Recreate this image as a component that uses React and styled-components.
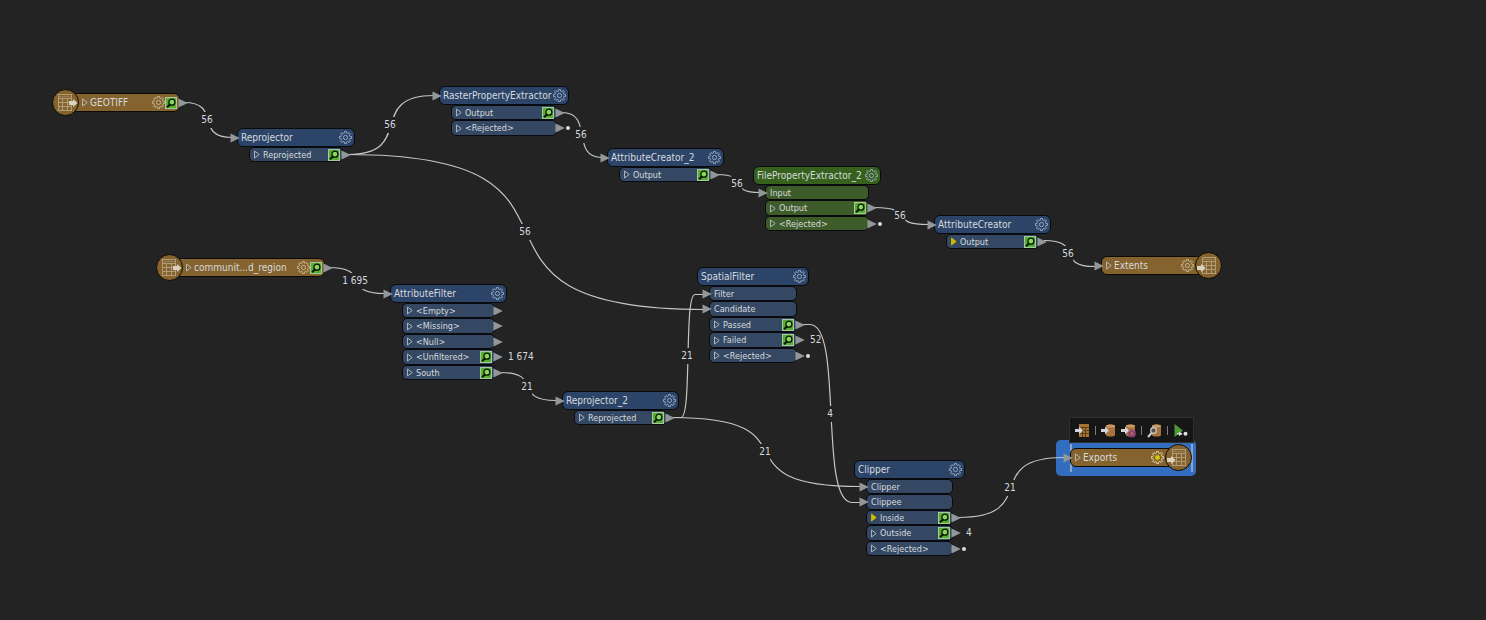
import React from 'react';
import styled, { createGlobalStyle, css } from 'styled-components';

const GlobalStyle = createGlobalStyle`
  *, *::before, *::after { box-sizing: border-box; }
  body {
    margin: 0;
    background: #232323;
    color: #d6dade;
    font-family: "DejaVu Sans Condensed", "DejaVu Sans", sans-serif;
    font-size: 10px;
    line-height: 12px;
  }
`;

const palettes = {
  blue: { head: '#2c4468', port: '#344863' },
  green: { head: '#35611c', port: '#3e5c2a' },
};

const Canvas = styled.main`
  position: relative;
  width: 100%;
  min-height: 100vh;
  overflow: hidden;
`;

const WireLayer = styled.svg`
  position: absolute;
  inset: 0;
  width: 100%;
  height: 100%;
  fill: none;
  stroke: #c6c6c6;
  stroke-width: 1.2;
`;

const WireLabel = styled.span`
  position: absolute;
  left: ${(p) => p.$x}px;
  top: ${(p) => p.$y}px;
  transform: translate(-50%, -50%);
  padding: 2px 0;
  background: #232323;
  white-space: nowrap;
`;

const NodeBox = styled.section`
  position: absolute;
  left: ${(p) => p.$x}px;
  top: ${(p) => p.$y}px;
  width: ${(p) => p.$w}px;
`;

const NodeHeader = styled.header`
  position: relative;
  display: flex;
  align-items: center;
  justify-content: space-between;
  height: 19px;
  padding: 0 2px 0 3px;
  border: 1px solid #080a0d;
  border-radius: 6px;
  background: ${(p) => palettes[p.$tone].head};
`;

const Title = styled.h2`
  margin: 0;
  font: inherit;
  white-space: nowrap;
`;

const PortList = styled.ul`
  display: grid;
  grid-auto-rows: 15px 16px;
  margin: 0 12px;
  padding: 0;
  list-style: none;
`;

const Port = styled.li`
  position: relative;
  display: flex;
  align-items: center;
  gap: 3px;
  padding: 0 2px 0 4px;
  border: 1px solid #080a0d;
  border-radius: 5px;
  background: ${(p) => palettes[p.$tone].port};
  font-size: 9px;
`;

const PortName = styled.span`
  flex: 1;
  white-space: nowrap;
`;

const IconButton = styled.button`
  display: flex;
  flex: none;
  margin: 0;
  padding: 0;
  border: 0;
  background: none;
  color: inherit;
`;

const Arrow = styled.svg`
  position: absolute;
  top: calc(50% - 5px);
  width: 10px;
  height: 10px;
  fill: #92979a;
  ${(p) => (p.$side === 'in' ? css`left: -8px;` : css`right: -9px;`)}
`;

const RejectDot = styled.i`
  position: absolute;
  top: calc(50% - 2px);
  right: -14px;
  width: 4px;
  height: 4px;
  border-radius: 50%;
  background: #dcdcdc;
`;

const PortCount = styled.span`
  position: absolute;
  left: calc(100% + 14px);
  font-size: 10px;
  white-space: nowrap;
`;

const Terminal = styled.section`
  position: absolute;
  left: ${(p) => p.$x}px;
  top: ${(p) => p.$y}px;
  display: flex;
  flex-direction: ${(p) => (p.$writer ? 'row-reverse' : 'row')};
  align-items: center;
  width: ${(p) => p.$w}px;
`;

const Disc = styled.div`
  z-index: 1;
  display: grid;
  flex: none;
  place-items: center;
  width: 27px;
  height: 27px;
  border: 1px solid #0d0a05;
  border-radius: 50%;
  background: #84632e;
`;

const Bar = styled.div`
  position: relative;
  display: flex;
  flex: 1;
  align-items: center;
  gap: 2px;
  height: 19px;
  border: 1px solid #0d0a05;
  background: #84632e;
  ${(p) =>
    p.$writer
      ? css`margin-right: -6px; padding: 0 6px 0 4px; border-radius: 6px 0 0 6px;`
      : css`margin-left: -6px; padding: 0 2px 0 8px; border-radius: 0 6px 6px 0;`}
`;

const BarName = styled(Title)`
  flex: 1;
`;

const Tools = styled.div`
  display: flex;
  align-items: center;
`;

const Selection = styled.div`
  position: absolute;
  left: 1056px;
  top: 440px;
  width: 140px;
  height: 36px;
  padding: 4px 3px 4px 14px;
  border-radius: 5px;
  background: #326dbf;
`;

const SelectionEdges = styled.div`
  height: 100%;
  border: solid #8ba6c8;
  border-width: 0 2px;
`;

const Toolbar = styled.div`
  position: absolute;
  left: 1069px;
  top: 417px;
  display: flex;
  align-items: center;
  gap: 5px;
  height: 26px;
  padding: 0 5px;
  border: 1px solid #2e2e2e;
  background: #161616;
`;

const Divider = styled.i`
  width: 1px;
  height: 9px;
  background: #7c7c7c;
`;

const gearPath = (() => {
  const points = [];
  for (let i = 0; i < 8; i += 1) {
    [[-15, 4.5], [-9, 6.1], [9, 6.1], [15, 4.5]].forEach(([offset, radius]) => {
      const a = ((i * 45 + offset) * Math.PI) / 180;
      points.push(`${(6.5 + radius * Math.cos(a)).toFixed(2)} ${(6.5 + radius * Math.sin(a)).toFixed(2)}`);
    });
  }
  return `M${points.join('L')}Z`;
})();

function Gear({ label, warm, active }) {
  return (
    <IconButton aria-label={`${label} parameters`}>
      <svg width="13" height="13" fill="none" stroke={warm ? '#cbbb9c' : '#9fb0c8'} strokeWidth="0.9">
        <path d={gearPath} strokeLinejoin="round" stroke={active ? '#ead9a8' : undefined} />
        <circle cx="6.5" cy="6.5" r={active ? 2 : 2.1} fill={active ? '#d8c800' : 'none'} stroke={active ? '#d8c800' : undefined} />
      </svg>
    </IconButton>
  );
}

function Expander({ label, filled }) {
  return (
    <IconButton aria-label={`Expand ${label}`}>
      <svg width="6" height="9">
        <path
          d="M.5 1 5.2 4.5.5 8Z"
          fill={filled ? '#cdbb00' : 'none'}
          stroke={filled ? '#cdbb00' : '#b9c0c8'}
          strokeWidth="0.9"
        />
      </svg>
    </IconButton>
  );
}

function Inspect({ label }) {
  return (
    <IconButton aria-label={`Inspect ${label}`}>
      <svg width="12" height="12">
        <rect x=".5" y=".5" width="11" height="11" fill="#55b030" stroke="#a9c7a0" />
        <path d="M2 10.200 4.900 7.600" stroke="#0b1505" strokeWidth="2" />
        <circle cx="6.900" cy="5.200" r="3" fill="#8bd860" stroke="#0b1505" strokeWidth="1.300" />
      </svg>
    </IconButton>
  );
}

function ArrowHead({ side }) {
  return (
    <Arrow $side={side} viewBox="0 0 10 10" aria-hidden="true">
      <path d="M.5.5 9.800 5 .5 9.500Z" />
    </Arrow>
  );
}

function TableGlyph({ writer }) {
  const x = writer ? 6 : 5;
  return (
    <svg width="25" height="25" aria-hidden="true">
      <g fill="none" stroke="#b09c78" strokeWidth="1">
        <rect x={x + 0.5} y="4.5" width="13" height="16" />
        <path d={`M${x} 8.5h14M${x} 12.5h14M${x} 16.5h14M${x + 4.5} 8v13M${x + 9.5} 8v13`} />
        <path d={`M${x + 1} 6.5h12`} strokeOpacity=".5" />
      </g>
      <path
        transform={writer ? 'translate(1 15)' : 'translate(16 13)'}
        d="M0-2H4V-4L8.5 0 4 4V2H0Z"
        fill="#dcd2c0"
      />
    </svg>
  );
}

const whiteArrow = 'M0 6h4V3.5L8 7.5 4 11.5V9H0Z';
const drum = 'M5 3c0-1 2-1.500 4.500-1.500S14 2 14 3v9c0 1-2 1.500-4.500 1.500S5 13 5 12Z';

function ToolGlyph({ kind }) {
  return (
    <svg width="15" height="15" aria-hidden="true">
      {kind === 'table' && (
        <>
          <rect x="4" y="1" width="10" height="13" fill="#a87434" />
          <path d="M4 4.500h10M4 7.500h10M4 10.500h10M7.500 4v10M10.500 4v10" stroke="#4f3413" strokeWidth="0.8" />
        </>
      )}
      {kind !== 'table' && kind !== 'run' && (
        <>
          <path d={drum} fill="#a8733c" />
          <ellipse cx="9.500" cy="3" rx="4.500" ry="1.500" fill="#c79b66" />
        </>
      )}
      {kind === 'options' && (
        <>
          <circle cx="11" cy="10.500" r="3" fill="none" stroke="#8f3d88" strokeWidth="2.200" strokeDasharray="1.500 .8" />
          <circle cx="11" cy="10.500" r="2" fill="none" stroke="#8f3d88" strokeWidth="1.200" />
        </>
      )}
      {(kind === 'table' || kind === 'drum' || kind === 'options') && <path d={whiteArrow} fill="#d4d4d4" />}
      {kind === 'inspect' && (
        <g stroke="#cdd1d4" fill="#5c5346">
          <path d="M1 14 4.500 10" strokeWidth="2" />
          <circle cx="6.500" cy="7.500" r="2.800" strokeWidth="1.200" />
        </g>
      )}
      {kind === 'run' && (
        <>
          <path d="M1.500 1 10 7.500 1.500 14Z" fill="#4c9a35" />
          <path d="M4 10.800h5" stroke="#e0e0e0" strokeWidth="1.200" />
          <path d="M6 8.500 9.500 10.800 6 13Z" fill="#e0e0e0" />
          <circle cx="12.500" cy="10.800" r="2" fill="#e0e0e0" />
        </>
      )}
    </svg>
  );
}

const nodes = [
  { name: 'Reprojector', x: 237, y: 128, w: 118, input: true, ports: [{ name: 'Reprojected', inspect: true }] },
  {
    name: 'RasterPropertyExtractor', x: 439, y: 86, w: 130, input: true,
    ports: [{ name: 'Output', inspect: true }, { name: '<Rejected>', dot: true }],
  },
  { name: 'AttributeCreator_2', x: 607, y: 148, w: 117, input: true, ports: [{ name: 'Output', inspect: true }] },
  {
    name: 'FilePropertyExtractor_2', x: 753, y: 166, w: 128, tone: 'green',
    ports: [{ name: 'Input', input: true }, { name: 'Output', inspect: true }, { name: '<Rejected>', dot: true }],
  },
  { name: 'AttributeCreator', x: 934, y: 215, w: 117, input: true, ports: [{ name: 'Output', inspect: true, filled: true }] },
  {
    name: 'AttributeFilter', x: 390, y: 284, w: 117, input: true,
    ports: [
      { name: '<Empty>' }, { name: '<Missing>' }, { name: '<Null>' },
      { name: '<Unfiltered>', inspect: true, count: '1 674' }, { name: 'South', inspect: true },
    ],
  },
  {
    name: 'SpatialFilter', x: 697, y: 267, w: 112,
    ports: [
      { name: 'Filter', input: true }, { name: 'Candidate', input: true }, { name: 'Passed', inspect: true },
      { name: 'Failed', inspect: true, count: '52' }, { name: '<Rejected>', dot: true },
    ],
  },
  { name: 'Reprojector_2', x: 562, y: 391, w: 117, input: true, ports: [{ name: 'Reprojected', inspect: true }] },
  {
    name: 'Clipper', x: 854, y: 460, w: 111,
    ports: [
      { name: 'Clipper', input: true }, { name: 'Clippee', input: true },
      { name: 'Inside', inspect: true, filled: true }, { name: 'Outside', inspect: true, count: '4' },
      { name: '<Rejected>', dot: true },
    ],
  },
];

const terminals = [
  { name: 'GEOTIFF', x: 52, y: 89, w: 128 },
  { name: 'communit...d_region', x: 156, y: 254, w: 169 },
  { name: 'Extents', x: 1101, y: 252, w: 121, writer: true },
  { name: 'Exports', x: 1070, y: 444, w: 122, writer: true, active: true },
];

const wires = [
  { from: [184, 102.5], to: [232, 137.5], label: '56' },
  { from: [348, 154.5], to: [434, 95.5], label: '56' },
  { from: [348, 154.5], to: [704, 309.5], label: '56' },
  { from: [562, 112.5], to: [602, 157.5], label: '56' },
  { from: [717, 174.5], to: [760, 192.5], label: '56' },
  { from: [874, 207.5], to: [929, 224.5], label: '56' },
  { from: [1044, 240.5], to: [1095, 266.5], label: '56' },
  { from: [328, 267.5], to: [385, 293.5], label: '1 695' },
  { from: [500, 372.5], to: [556, 400.5], label: '21' },
  { from: [672, 417.5], to: [704, 294.5], label: '21', lead: 9 },
  { from: [672, 417.5], to: [860, 486.5], label: '21' },
  { from: [802, 324.5], to: [860, 502.5], label: '4', lead: 8 },
  { from: [958, 517.5], to: [1064, 457.5], label: '21' },
];

const toolGroups = ['table', null, 'drum', 'options', null, 'inspect', null, 'run'];
const toolNames = {
  table: 'Edit feature type',
  drum: 'Edit writer',
  options: 'Edit writer parameters',
  inspect: 'Inspect written data',
  run: 'Run to this writer',
};

// A wire leaves and enters its ports level; a steep one runs straight for `lead` first.
function wirePath({ from, to, lead = 0 }) {
  const [x1, y1] = [from[0] + lead, from[1]];
  const [x2, y2] = [to[0] - lead, to[1]];
  const d = (x2 - x1) * 0.8;
  return `M${from[0]} ${y1}H${x1}C${x1 + d} ${y1} ${x2 - d} ${y2} ${x2} ${y2}H${to[0]}`;
}

function Node({ name, x, y, w, tone = 'blue', input, ports }) {
  return (
    <NodeBox $x={x} $y={y} $w={w}>
      <NodeHeader $tone={tone}>
        {input && <ArrowHead side="in" />}
        <Title>{name}</Title>
        <Gear label={name} />
      </NodeHeader>
      <PortList>
        {ports.map((port) => (
          <Port key={port.name} $tone={tone}>
            {port.input ? <ArrowHead side="in" /> : <Expander label={port.name} filled={port.filled} />}
            <PortName>{port.name}</PortName>
            {port.inspect && <Inspect label={port.name} />}
            {!port.input && <ArrowHead side="out" />}
            {port.dot && <RejectDot />}
            {port.count && <PortCount>{port.count}</PortCount>}
          </Port>
        ))}
      </PortList>
    </NodeBox>
  );
}

function DataTerminal({ name, x, y, w, writer, active }) {
  return (
    <Terminal $x={x} $y={y} $w={w} $writer={writer}>
      <Disc><TableGlyph writer={writer} /></Disc>
      <Bar $writer={writer}>
        {writer && <ArrowHead side="in" />}
        <Expander label={name} />
        <BarName>{name}</BarName>
        <Tools>
          <Gear label={name} warm active={active} />
          {!writer && <Inspect label={name} />}
        </Tools>
        {!writer && <ArrowHead side="out" />}
      </Bar>
    </Terminal>
  );
}

export default function App() {
  return (
    <>
      <GlobalStyle />
      <Canvas>
        <Selection><SelectionEdges /></Selection>
        <WireLayer aria-hidden="true">
          {wires.map((wire) => <path key={wirePath(wire)} d={wirePath(wire)} />)}
        </WireLayer>
        {wires.map((wire) => (
          <WireLabel
            key={wirePath(wire)}
            $x={Math.floor((wire.from[0] + wire.to[0]) / 2) - 1}
            $y={Math.round((wire.from[1] + wire.to[1]) / 2)}
          >
            {wire.label}
          </WireLabel>
        ))}
        {nodes.map((node) => <Node key={node.name} {...node} />)}
        {terminals.map((terminal) => <DataTerminal key={terminal.name} {...terminal} />)}
        <Toolbar role="toolbar" aria-label="Exports actions">
          {toolGroups.map((kind, i) =>
            kind ? (
              <IconButton key={kind} aria-label={toolNames[kind]}><ToolGlyph kind={kind} /></IconButton>
            ) : (
              <Divider key={i} />
            ),
          )}
        </Toolbar>
      </Canvas>
    </>
  );
}
